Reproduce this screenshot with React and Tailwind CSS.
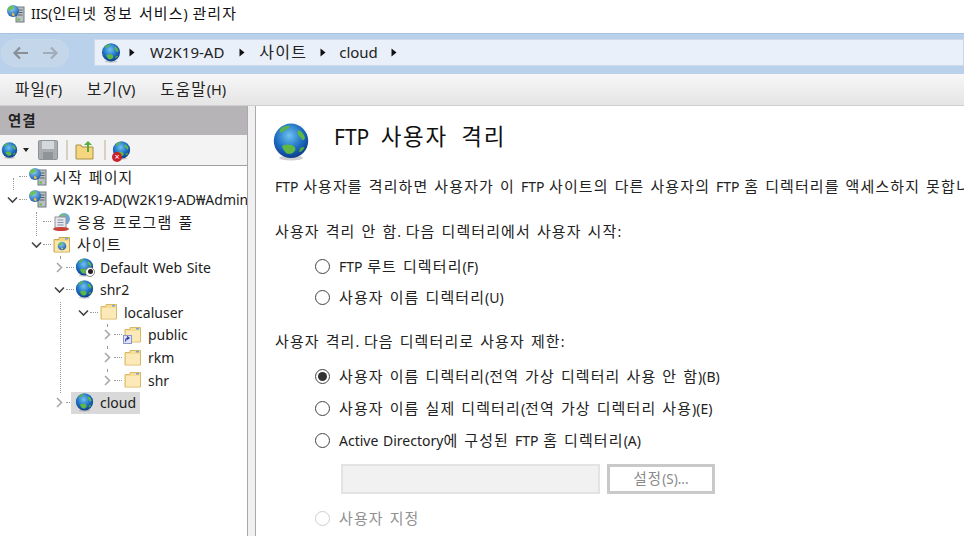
const FONT = "font-['Noto_Sans','Noto_Sans_CJK_KR',sans-serif]";

// hangul runs are set a little larger and looser than the latin next to them
function Txt({ children }) {
  return String(children)
    .split(/([가-힣][가-힣 ]*)/)
    .map((part, i) =>
      /[가-힣]/.test(part) ? (
        <span key={i} className="text-[1.07em] tracking-[0.075em]">{part}</span>
      ) : (
        part
      ),
    );
}

function Globe({ size = 16, id, className = "" }) {
  return (
    <svg width={size} height={size} viewBox="0 0 32 32" className={`shrink-0 ${className}`}>
      <defs>
        <radialGradient id={id} cx="0.45" cy="0.35" r="0.7">
          <stop offset="0" stopColor="#6fc3ee" />
          <stop offset="0.55" stopColor="#1f70c4" />
          <stop offset="1" stopColor="#0a3281" />
        </radialGradient>
      </defs>
      <ellipse cx="16" cy="29.500" rx="10" ry="2" fill="#888" opacity="0.4" />
      <circle cx="16" cy="15" r="14.500" fill={`url(#${id})`} />
      <path d="M8 4c2-1.500 5-2 7-1.500 0 1.500-2 2.500-3.500 3-1 1.500-3 2.500-5 2.500C6 7 7 5 8 4z" fill="#57b548" />
      <path d="M22 6c2 0 4.500 2.500 5.500 5.500.5 2-.5 3.500-2 2.500-1-1-1.500-2-3-3.500-1-1.500-1.500-3.500-.5-4.500z" fill="#5fb843" />
      <path d="M9 19c3-1.500 8-1 10 1 1.500 2 .5 4-2 5.500-3 1-5 .5-6.500-2C9.500 22 8 20 9 19z" fill="#5fb843" />
      <path d="M24 21c1.500-1 3-1 3 0s-2 3-3.500 3.500c-1 0-.5-2.500.5-3.500z" fill="#4fa83c" />
    </svg>
  );
}

function Folder({ shortcut }) {
  return (
    <svg width="20" height="18" viewBox="0 0 20 18">
      <path d="M2 3.500h5V1.500h10.500v14.500H2z" fill="#f7dc93" stroke="#d9b869" />
      <rect x="3" y="5" width="14" height="10.500" fill="#fbeab8" />
      <rect x="13" y="2" width="3" height="1.500" fill="#6fa8dc" />
      {shortcut && (
        <g>
          <rect x="0.500" y="9.500" width="8" height="8" fill="#dfe3f5" stroke="#8e96c8" />
          <path d="M2.500 15.500c0-2.500 1-3.500 3-3.500M4 10.500l2 1.500-2 1.500" fill="none" stroke="#2b3fa8" strokeWidth="1.200" />
        </g>
      )}
    </svg>
  );
}

function Globe2({ id }) {
  return (
    <g>
      <defs>
        <radialGradient id={id} cx="0.4" cy="0.3" r="0.8">
          <stop offset="0" stopColor="#8fd0f5" />
          <stop offset="1" stopColor="#0f4ea5" />
        </radialGradient>
      </defs>
      <circle cx="7" cy="7" r="6" fill={`url(#${id})`} />
      <path d="M3 3c2-1.500 4-1 5 0 0 1.500-2 2-3 3-1 .5-2 1-3 .5 0-1.500.5-2.500 1-3.500z" fill="#6cc24a" />
      <path d="M6 9.500c2-.5 3 .5 2.500 2-1 1-2 .5-2.500-.5z" fill="#f0c040" />
    </g>
  );
}

function ServerGlobe({ id }) {
  return (
    <svg width="20" height="20" viewBox="0 0 20 20">
      <rect x="10" y="3" width="8" height="15" fill="#b9c0c4" stroke="#6f7a80" />
      <path d="M11.500 6h5M11.500 8.500h5M11.500 11h5" stroke="#55606a" />
      <rect x="11.500" y="14.500" width="2.500" height="2" fill="#6dbb45" />
      <Globe2 id={id} />
    </svg>
  );
}

function AppPoolIcon() {
  return (
    <svg width="20" height="20" viewBox="0 0 20 20">
      <circle cx="12" cy="7" r="6" fill="#6aa5dc" />
      <path d="M9 3c2-1 4-1 5 0-1 2-3 2-5 1z" fill="#7dbf5a" />
      <rect x="3" y="5" width="11" height="11" fill="#e8e8ec" stroke="#9a8f8f" />
      <path d="M5.500 8h6M5.500 10.500h6M5.500 13h6" stroke="#8090b0" />
      <ellipse cx="9" cy="17" rx="8" ry="2" fill="#c8433a" />
    </svg>
  );
}

function SitesIcon({ id }) {
  return (
    <svg width="20" height="18" viewBox="0 0 20 18">
      <path d="M2 3.500h5V1.500h10.500v14.500H2z" fill="#f4d584" stroke="#c9a658" />
      <rect x="3" y="5" width="14" height="10.500" fill="#fbe7ad" />
      <rect x="13" y="2" width="3" height="1.500" fill="#6fa8dc" />
      <svg x="5" y="5" width="10" height="10" viewBox="0 0 14 14"><Globe2 id={id} /></svg>
    </svg>
  );
}

function StoppedGlobe({ id }) {
  return (
    <span className="relative flex">
      <Globe size={19} id={id} />
      <span className="absolute bottom-[0px] right-[-1px] flex h-[10px] w-[10px] items-center justify-center rounded-full border border-[#888] bg-white">
        <span className="h-[5px] w-[5px] rounded-full bg-[#222]" />
      </span>
    </span>
  );
}

function Chevron({ open }) {
  if (open) {
    return (
      <svg width="11" height="11" viewBox="0 0 11 11">
        <path d="M1 3.500l4.500 4.500L10 3.500" fill="none" stroke="#444" strokeWidth="1.600" />
      </svg>
    );
  }
  return (
    <svg width="11" height="11" viewBox="0 0 11 11">
      <path d="M3 1l4.500 4.500L3 10" fill="none" stroke="#a8a8a8" strokeWidth="1.600" />
    </svg>
  );
}

function Caret({ className = "ml-[15px] mr-[14px]" }) {
  return (
    <svg width="6" height="9" viewBox="0 0 6 9" className={`shrink-0 ${className}`}>
      <path d="M0.500 0.500l5 4-5 4z" fill="#111" />
    </svg>
  );
}

function Row({ left, chevron, icon, label, selected }) {
  return (
    <div className="flex h-[22.6px] items-center" style={{ paddingLeft: left }}>
      <span className="flex w-[14px] shrink-0 justify-center">
        {chevron && <Chevron open={chevron === "open"} />}
      </span>
      <span className="w-[8px] shrink-0 border-t border-dotted border-[#999]" />
      <span className={`flex h-[22px] items-center whitespace-nowrap ${selected ? "-ml-[3px] bg-[#d9d9d9] pl-[3px] pr-[4px]" : ""}`}>
        <span className="flex w-[21px] shrink-0 items-center justify-center">{icon}</span>
        <span className="ml-[5px] text-[14px] text-[#1c1c1c]"><Txt>{label}</Txt></span>
      </span>
    </div>
  );
}

function Radio({ checked, disabled, label, className = "" }) {
  return (
    <div className={`flex items-center gap-[9px] text-[14px] ${disabled ? "text-[#8f8f8f]" : "text-[#222]"} ${className}`}>
      <span className={`flex h-[15px] w-[15px] shrink-0 items-center justify-center rounded-full border bg-white ${disabled ? "border-[#cfcfcf]" : "border-[#444]"}`}>
        {checked && <span className="h-[9px] w-[9px] rounded-full bg-[#333]" />}
      </span>
      <span className="whitespace-nowrap"><Txt>{label}</Txt></span>
    </div>
  );
}

export default function App() {
  return (
    <div className={`flex h-[536px] w-[964px] flex-col overflow-hidden bg-white [word-spacing:1px] ${FONT}`}>
      {/* title */}
      <div className="flex h-[33px] shrink-0 items-center pb-[6px] pl-[6px]">
        <ServerGlobe id="t1" />
        <span className="ml-[5px] text-[14px] text-[#111]"><Txt>IIS(인터넷 정보 서비스) 관리자</Txt></span>
      </div>

      {/* address bar */}
      <div className="flex h-[41px] shrink-0 items-start border-t border-[#a9c4e0] bg-[#b9d1ea] pl-[1px] pt-[5px]">
        <div className="flex h-[28px] w-[68px] shrink-0 items-center justify-around rounded-full border border-[#c8d9ea] bg-[#c3d6ea] px-[4px]">
          <svg width="18" height="14" viewBox="0 0 18 14"><path d="M8 1.500L2.500 7 8 12.500M3 7h13" fill="none" stroke="#8a8f96" strokeWidth="2.200" /></svg>
          <svg width="18" height="14" viewBox="0 0 18 14"><path d="M10 1.500L15.500 7 10 12.500M15 7H2" fill="none" stroke="#a3acb6" strokeWidth="2.200" /></svg>
        </div>
        <div className="ml-[25px] flex h-[27px] flex-1 items-center border border-[#cbd9e8] bg-[#e9f0f9] pl-[6px] text-[15px] text-[#222]">
          <Globe size={20} id="a1" />
          <Caret className="ml-[8px] mr-[15px]" />
          <span>W2K19-AD</span>
          <Caret />
          <span><Txt>사이트</Txt></span>
          <Caret className="ml-[13px] mr-[13px]" />
          <span>cloud</span>
          <Caret className="ml-[13px]" />
        </div>
      </div>

      {/* menu */}
      <div className="flex h-[31px] shrink-0 items-center gap-[25px] bg-gradient-to-b from-[#f7f7f7] to-[#e5e5e5] pl-[15px] text-[14.5px] text-[#222]">
        <span><Txt>파일(F)</Txt></span>
        <span><Txt>보기(V)</Txt></span>
        <span><Txt>도움말(H)</Txt></span>
      </div>

      <div className="flex min-h-0 flex-1 border-t border-[#cfcfcf]">
        {/* connections panel */}
        <div className="w-[247px] shrink-0 overflow-hidden">
          <div className="flex h-[29px] items-center bg-[#b6b4b6] pl-[8px] text-[13.5px] font-bold text-[#222]"><Txt>연결</Txt></div>
          <div className="flex h-[31px] items-center border-b border-[#a0a0a0] bg-[#f3f3f3] pl-[1px]">
            <Globe size={17} id="b1" />
            <svg width="7" height="4" viewBox="0 0 7 4" className="ml-[5px]"><path d="M0 0h6L3 4z" fill="#222" /></svg>
            <svg width="21" height="21" viewBox="0 0 21 21" className="ml-[8px]">
              <rect x="0.500" y="0.500" width="19" height="19" rx="1" fill="#a9adb1" stroke="#8d9296" />
              <rect x="4" y="1" width="12" height="8" fill="#d5d8da" />
              <rect x="5" y="12" width="10" height="8" fill="#8f9498" />
            </svg>
            <span className="mx-[7px] h-[20px] w-[2px] bg-[#d5d0c0]" />
            <svg width="19" height="19" viewBox="0 0 19 19">
              <path d="M1 4h5l1 2h11v12H1z" fill="#f5d67e" stroke="#a99044" />
              <path d="M12 11V4H9l4-4 4 4h-3v7z" fill="#58ad3d" />
            </svg>
            <span className="ml-[10px] mr-[6px] h-[20px] w-[2px] bg-[#d5d0c0]" />
            <span className="relative flex">
              <Globe size={19} id="b2" />
              <span className="absolute bottom-[-2px] left-0 flex h-[10px] w-[10px] items-center justify-center rounded-full bg-[#c8202c] text-[9px] leading-none text-white">×</span>
            </span>
          </div>

          <div className="relative -mt-[0.5px]">
            {/* tree guide lines */}
            <span className="absolute left-[13px] top-[12px] h-[12px] border-l border-dotted border-[#999]" />
            <span className="absolute left-[36px] top-[46px] h-[24px] border-l border-dotted border-[#999]" />
            <span className="absolute left-[60px] top-[136px] h-[91px] border-l border-dotted border-[#999]" />
            <span className="absolute left-[60px] top-[90px] h-[2px] border-l border-dotted border-[#999]" />
            <span className="absolute left-[107px] top-[158px] h-[2px] border-l border-dotted border-[#999]" />
            <span className="absolute left-[107px] top-[180px] h-[2px] border-l border-dotted border-[#999]" />
            <span className="absolute left-[107px] top-[203px] h-[2px] border-l border-dotted border-[#999]" />
            <Row left={5} icon={<ServerGlobe id="n1" />} label="시작 페이지" />
            <Row left={5} chevron="open" icon={<ServerGlobe id="n2" />} label="W2K19-AD(W2K19-AD₩Administrator)" />
            <Row left={29} icon={<AppPoolIcon />} label="응용 프로그램 풀" />
            <Row left={29} chevron="open" icon={<SitesIcon id="n3" />} label="사이트" />
            <Row left={52} chevron="closed" icon={<StoppedGlobe id="n4" />} label="Default Web Site" />
            <Row left={52} chevron="open" icon={<Globe size={19} id="n5" />} label="shr2" />
            <Row left={76} chevron="open" icon={<Folder />} label="localuser" />
            <Row left={100} chevron="closed" icon={<Folder shortcut />} label="public" />
            <Row left={100} chevron="closed" icon={<Folder />} label="rkm" />
            <Row left={100} chevron="closed" icon={<Folder />} label="shr" />
            <Row left={52} chevron="closed" icon={<Globe size={19} id="n6" />} label="cloud" selected />
          </div>
        </div>

        {/* splitter */}
        <div className="w-[9px] shrink-0 border-x border-[#a9a9a9] bg-[#f0f0f0]" />

        {/* feature page */}
        <div className="min-w-0 flex-1 overflow-hidden pl-[19px] text-[14px] text-[#222]">
          <div className="flex h-[60px] items-center pt-[12px]">
            <Globe size={38} id="h1" className="-ml-[3px]" />
            <h1 className="-mt-[10px] ml-[24px] whitespace-nowrap text-[21px] font-normal text-[#111] [word-spacing:6px]"><Txt>FTP 사용자 격리</Txt></h1>
          </div>
          <p className="mt-[9px] h-[22px] whitespace-nowrap leading-[22px]"><Txt>FTP 사용자를 격리하면 사용자가 이 FTP 사이트의 다른 사용자의 FTP 홈 디렉터리를 액세스하지 못합니다.</Txt></p>
          <p className="mt-[23px] h-[22px] leading-[22px]"><Txt>사용자 격리 안 함. 다음 디렉터리에서 사용자 시작:</Txt></p>
          <div className="mt-[13px] flex flex-col gap-[9px] pl-[40px]">
            <Radio className="h-[22px]" label="FTP 루트 디렉터리(F)" />
            <Radio className="h-[22px]" label="사용자 이름 디렉터리(U)" />
          </div>
          <p className="mt-[22px] h-[22px] leading-[22px]"><Txt>사용자 격리. 다음 디렉터리로 사용자 제한:</Txt></p>
          <div className="mt-[13px] flex flex-col gap-[10px] pl-[40px]">
            <Radio className="h-[22px]" checked label="사용자 이름 디렉터리(전역 가상 디렉터리 사용 안 함)(B)" />
            <Radio className="h-[22px]" label="사용자 이름 실제 디렉터리(전역 가상 디렉터리 사용)(E)" />
            <Radio className="h-[22px]" label="Active Directory에 구성된 FTP 홈 디렉터리(A)" />
          </div>
          <div className="mt-[13px] flex items-center gap-[7px] pl-[66px]">
            <div className="h-[30px] w-[259px] border-2 border-[#e3e3e3] bg-[#f1f1f1]" />
            <div className="flex h-[30px] w-[108px] items-center justify-center border-[3px] border-[#c9c9c9] bg-white text-[13.5px] text-[#8a8a8a]"><span><Txt>설정(S)...</Txt></span></div>
          </div>
          <Radio className="mt-[13px] h-[22px] pl-[40px]" disabled label="사용자 지정" />
        </div>
      </div>
    </div>
  );
}
